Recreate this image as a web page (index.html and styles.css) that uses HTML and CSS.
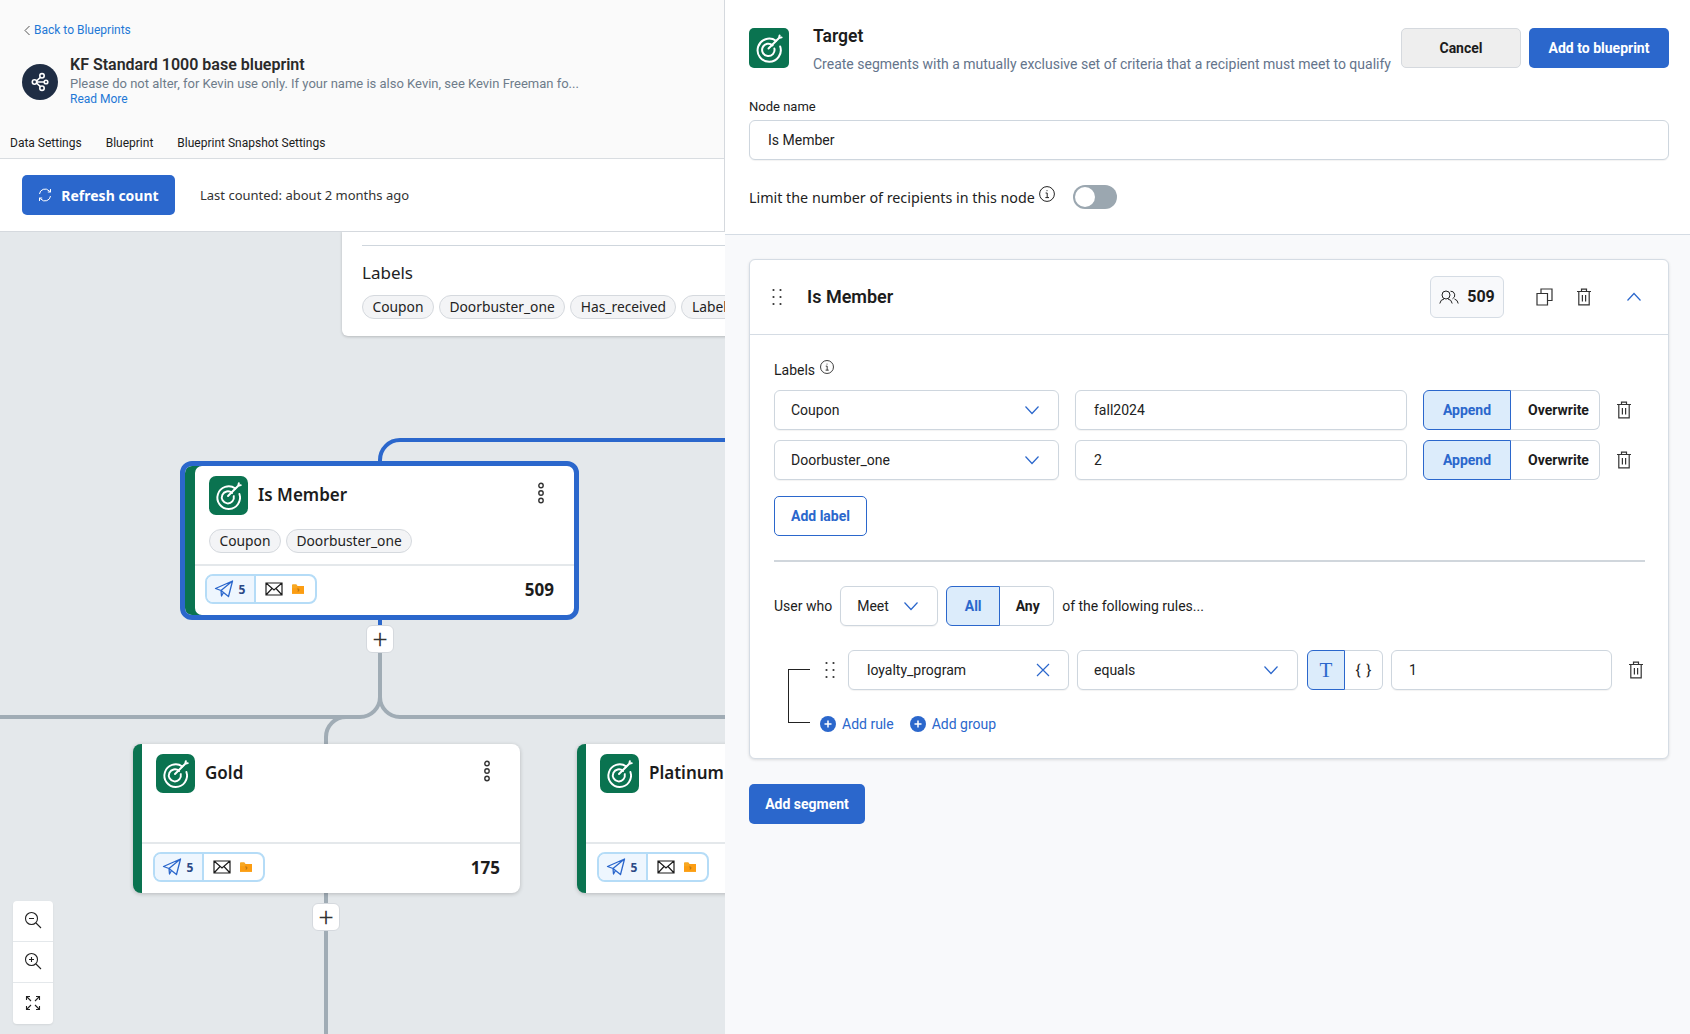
FILE: index.html
```html
<!DOCTYPE html>
<html lang="en">
<head>
    <meta charset="UTF-8">
    <title>KF Standard 1000 base blueprint</title>
    <link rel="stylesheet" href="styles.css">
</head>
<body>
    <svg class="defs">
        <symbol id="target" viewBox="0 0 40 40">
            <path d="M27 12.8A11.6 11.6 0 1 0 31.2 18.5" fill="none" stroke="#fff" stroke-width="2" stroke-linecap="round"/>
            <path d="M23.6 17.4A6.2 6.2 0 1 0 25.4 20.6" fill="none" stroke="#fff" stroke-width="2" stroke-linecap="round"/>
            <path d="M19.5 20.5L30 10M30 10L30.6 7.4M30 10L32.6 9.4" fill="none" stroke="#fff" stroke-width="2" stroke-linecap="round"/>
        </symbol>
        <symbol id="plane" viewBox="0 0 20 20">
            <path d="M18.5 2L1.5 9.5L7 11.5L18.5 2L14.5 17.5L9.5 13.5L7 11.5L7.5 17L9.5 13.5" fill="none" stroke="currentColor" stroke-width="1.3" stroke-linejoin="round"/>
        </symbol>
        <symbol id="mail" viewBox="0 0 18 16">
            <path d="M1 2H17V14H1ZM1 2L9 9L17 2M1 14L7 7.5M17 14L11 7.5" fill="none" stroke="#1c1c1c" stroke-width="1.2"/>
        </symbol>
        <symbol id="folder" viewBox="0 0 16 14">
            <path d="M1 2.5Q1 1.5 2 1.5H6L7.5 3.5H15V12.5H1Z" fill="#f7a823"/>
            <path d="M7.5 3.5H15V12.5H1V6H6Z" fill="#fc9d12"/>
            <path d="M7 7H9V9H8V10" fill="none" stroke="#9a6a1a" stroke-width=".8"/>
        </symbol>
        <symbol id="trash" viewBox="0 0 16 18">
            <path d="M1 3.5H15M5.5 3.5V1.2H10.5V3.5M2.8 3.5V16.8H13.2V3.5M6.4 7V13.5M9.6 7V13.5" fill="none" stroke="currentColor" stroke-width="1.2"/>
        </symbol>
        <symbol id="chev" viewBox="0 0 16 10">
            <path d="M1.5 1.5L8 8.5L14.5 1.5" fill="none" stroke="#2b67cc" stroke-width="1.2"/>
        </symbol>
        <symbol id="info" viewBox="0 0 16 16">
            <circle cx="8" cy="8" r="7.4" fill="none" stroke="#222" stroke-width="1"/>
            <path d="M6.6 7H8.2V11.6M6.4 11.6H10M8 4.2V5.2" fill="none" stroke="#222" stroke-width="1"/>
        </symbol>
        <symbol id="dots" viewBox="0 0 10 18">
            <g fill="#333">
                <circle cx="1.5" cy="2" r="1.1"/><circle cx="8.5" cy="2" r="1.1"/>
                <circle cx="1.5" cy="9" r="1.1"/><circle cx="8.5" cy="9" r="1.1"/>
                <circle cx="1.5" cy="16" r="1.1"/><circle cx="8.5" cy="16" r="1.1"/>
            </g>
        </symbol>
        <symbol id="kebab" viewBox="0 0 8 22">
            <g fill="none" stroke="#333" stroke-width="1.4">
                <circle cx="4" cy="3.5" r="2.2"/><circle cx="4" cy="11" r="2.2"/><circle cx="4" cy="18.5" r="2.2"/>
            </g>
        </symbol>
        <symbol id="addcircle" viewBox="0 0 16 16">
            <circle cx="8" cy="8" r="8" fill="#2b67cc"/>
            <path d="M8 4.5V11.5M4.5 8H11.5" stroke="#fff" stroke-width="1.5"/>
        </symbol>
    </svg>

    <div class="left">
        <div class="bp-head">
            <a class="back"><svg width="7" height="11" viewBox="0 0 7 11"><path d="M5.5 1L1 5.5L5.5 10" fill="none" stroke="#555" stroke-width="1"/></svg>Back to Blueprints</a>
            <div class="bp-info">
                <div class="bp-avatar">
                    <svg width="20" height="20" viewBox="0 0 20 20"><g fill="none" stroke="#fff" stroke-width="1.6"><circle cx="4.5" cy="10" r="2.2"/><circle cx="12" cy="3.8" r="2.2"/><circle cx="12" cy="16.2" r="2.2"/><circle cx="16" cy="10" r="1.8"/><path d="M6.5 9L10.4 5.3M6.5 11L10.4 14.7M6.7 10H14.2"/></g></svg>
                </div>
                <div>
                    <div class="bp-title">KF Standard 1000 base blueprint</div>
                    <div class="bp-desc">Please do not alter, for Kevin use only. If your name is also Kevin, see Kevin Freeman fo...</div>
                    <a class="read-more">Read More</a>
                </div>
            </div>
            <div class="tabs">
                <span>Data Settings</span>
                <span>Blueprint</span>
                <span>Blueprint Snapshot Settings</span>
            </div>
        </div>
        <div class="count-bar">
            <button class="btn-refresh">
                <svg width="14" height="16" viewBox="0 0 14 16"><path d="M1.5 7A5.5 5.5 0 0 1 11 3.8L12.5 5M12.5 9A5.5 5.5 0 0 1 3 12.2L1.5 11M12.5 2V5H9.8M1.5 14V11H4.2" fill="none" stroke="#fff" stroke-width="1"/></svg>
                Refresh count
            </button>
            <span class="last-counted">Last counted: about 2 months ago</span>
        </div>

        <div class="canvas">
            <svg class="wires" width="725" height="803">
                <g fill="none" stroke-width="4">
                    <path d="M380 230V228a20 20 0 0 1 20-20H725M380 388V396" stroke="#2b67cc"/>
                    <path d="M380 420V465a20 20 0 0 1-20 20H0M380 465a20 20 0 0 0 20 20H725M346 485a20 20 0 0 0-20 20V514M326 660V803" stroke="#a0acb5"/>
                </g>
            </svg>

            <div class="labels-card">
                <div class="labels-rule"></div>
                <div class="labels-title">Labels</div>
                <div class="chips">
                    <span class="chip">Coupon</span>
                    <span class="chip">Doorbuster_one</span>
                    <span class="chip">Has_received</span>
                    <span class="chip">Label</span>
                </div>
            </div>

            <div class="node selected node-member">
                <div class="node-top">
                    <svg class="node-icon" width="39" height="39"><use href="#target"/></svg>
                    <span class="node-name">Is Member</span>
                    <svg class="kebab" width="8" height="22"><use href="#kebab"/></svg>
                </div>
                <div class="chips node-chips">
                    <span class="chip">Coupon</span>
                    <span class="chip">Doorbuster_one</span>
                </div>
                <div class="node-foot">
                    <div class="pill">
                        <span class="pill-a"><svg width="20" height="20"><use href="#plane"/></svg><span class="pill-num">5</span></span>
                        <span class="pill-b"><svg width="18" height="16"><use href="#mail"/></svg><svg width="14" height="12"><use href="#folder"/></svg></span>
                    </div>
                    <span class="node-count">509</span>
                </div>
            </div>
            <button class="plus plus-member">+</button>

            <div class="node node-gold">
                <div class="node-top">
                    <svg class="node-icon" width="39" height="39"><use href="#target"/></svg>
                    <span class="node-name">Gold</span>
                    <svg class="kebab" width="8" height="22"><use href="#kebab"/></svg>
                </div>
                <div class="node-foot">
                    <div class="pill">
                        <span class="pill-a"><svg width="20" height="20"><use href="#plane"/></svg><span class="pill-num">5</span></span>
                        <span class="pill-b"><svg width="18" height="16"><use href="#mail"/></svg><svg width="14" height="12"><use href="#folder"/></svg></span>
                    </div>
                    <span class="node-count">175</span>
                </div>
            </div>
            <button class="plus plus-gold">+</button>

            <div class="node node-platinum">
                <div class="node-top">
                    <svg class="node-icon" width="39" height="39"><use href="#target"/></svg>
                    <span class="node-name">Platinum</span>
                </div>
                <div class="node-foot">
                    <div class="pill">
                        <span class="pill-a"><svg width="20" height="20"><use href="#plane"/></svg><span class="pill-num">5</span></span>
                        <span class="pill-b"><svg width="18" height="16"><use href="#mail"/></svg><svg width="14" height="12"><use href="#folder"/></svg></span>
                    </div>
                </div>
            </div>

            <div class="zoom-tools">
                <div class="zoom-btn"><svg width="18" height="18" viewBox="0 0 18 18"><g fill="none" stroke="#222" stroke-width="1.1"><circle cx="7.5" cy="7.5" r="6"/><path d="M12 12L17 17M5 7.5H10"/></g></svg></div>
                <div class="zoom-btn"><svg width="18" height="18" viewBox="0 0 18 18"><g fill="none" stroke="#222" stroke-width="1.1"><circle cx="7.5" cy="7.5" r="6"/><path d="M12 12L17 17M5 7.5H10M7.5 5V10"/></g></svg></div>
                <div class="zoom-btn"><svg width="16" height="16" viewBox="0 0 16 16"><path d="M6 6L1.5 1.5M1.5 5V1.5H5M10 6L14.5 1.5M11 1.5H14.5V5M6 10L1.5 14.5M1.5 11V14.5H5M10 10L14.5 14.5M14.5 11V14.5H11" fill="none" stroke="#222" stroke-width="1.1"/></svg></div>
            </div>
        </div>
    </div>

    <div class="right">
        <div class="panel-top">
            <div class="panel-head">
                <svg class="panel-icon" width="40" height="40"><use href="#target"/></svg>
                <div class="panel-text">
                    <div class="panel-title">Target</div>
                    <div class="panel-desc">Create segments with a mutually exclusive set of criteria that a recipient must meet to qualify</div>
                </div>
                <button class="btn btn-cancel">Cancel</button>
                <button class="btn btn-primary btn-add">Add to blueprint</button>
            </div>
            <label class="field-label">Node name</label>
            <div class="input node-input">Is Member</div>
            <div class="limit-row">
                <span class="limit-text">Limit the number of recipients in this node</span>
                <svg class="limit-info" width="16" height="16"><use href="#info"/></svg>
                <span class="toggle"><span class="toggle-knob"></span></span>
            </div>
        </div>

        <div class="panel-body">
            <div class="segment">
                <div class="segment-head">
                    <svg width="10" height="18"><use href="#dots"/></svg>
                    <span class="segment-name">Is Member</span>
                    <span class="seg-count">
                        <svg width="20" height="14" viewBox="0 0 20 14"><g fill="none" stroke="#222" stroke-width="1"><circle cx="7" cy="5" r="4"/><path d="M.8 13.5Q1.5 9.5 5 9M13.2 13.5Q12.5 9.5 9 9M11.5 1.2A4 4 0 0 1 13.5 8.8M19.2 13.5Q18.8 10 15.5 9"/></g></svg>
                        509
                    </span>
                    <svg class="seg-copy" width="17" height="18" viewBox="0 0 17 18"><path d="M1 5.5H11.5V17H1ZM5 5.5V1H16V12.5H11.5" fill="none" stroke="#333" stroke-width="1.2"/></svg>
                    <svg class="seg-trash" width="16" height="18"><use href="#trash"/></svg>
                    <svg class="seg-chev" width="16" height="10"><use href="#chev"/></svg>
                </div>
                <div class="segment-body">
                    <div class="labels-head">
                        <span>Labels</span>
                        <svg width="14" height="14"><use href="#info"/></svg>
                    </div>
                    <div class="label-row">
                        <div class="input select"><span>Coupon</span><svg width="16" height="10"><use href="#chev"/></svg></div>
                        <div class="input label-value">fall2024</div>
                        <div class="seg-toggle">
                            <span class="opt opt-on opt-append">Append</span><span class="opt opt-over">Overwrite</span>
                        </div>
                        <svg class="row-trash" width="16" height="18"><use href="#trash"/></svg>
                    </div>
                    <div class="label-row">
                        <div class="input select"><span>Doorbuster_one</span><svg width="16" height="10"><use href="#chev"/></svg></div>
                        <div class="input label-value">2</div>
                        <div class="seg-toggle">
                            <span class="opt opt-on opt-append">Append</span><span class="opt opt-over">Overwrite</span>
                        </div>
                        <svg class="row-trash" width="16" height="18"><use href="#trash"/></svg>
                    </div>
                    <button class="btn btn-outline">Add label</button>
                    <div class="body-rule"></div>
                    <div class="who-row">
                        <span>User who</span>
                        <div class="input select meet"><span>Meet</span><svg width="16" height="10"><use href="#chev"/></svg></div>
                        <div class="seg-toggle">
                            <span class="opt opt-on opt-all">All</span><span class="opt opt-any">Any</span>
                        </div>
                        <span>of the following rules...</span>
                    </div>
                    <div class="rules">
                        <div class="rule-tree"></div>
                        <div class="rule-main">
                            <div class="rule-row">
                                <svg class="rule-drag" width="10" height="18"><use href="#dots"/></svg>
                                <div class="input select rule-field"><span>loyalty_program</span><svg width="14" height="14" viewBox="0 0 14 14"><path d="M1 1L13 13M13 1L1 13" fill="none" stroke="#2b67cc" stroke-width="1.2"/></svg></div>
                                <div class="input select rule-op"><span>equals</span><svg width="16" height="10"><use href="#chev"/></svg></div>
                                <div class="seg-toggle rule-type">
                                    <span class="opt opt-on opt-t">T</span><span class="opt opt-brace">{ }</span>
                                </div>
                                <div class="input rule-value">1</div>
                                <svg class="rule-trash" width="16" height="18"><use href="#trash"/></svg>
                            </div>
                            <div class="rule-actions">
                                <a class="add-link"><svg width="16" height="16"><use href="#addcircle"/></svg>Add rule</a>
                                <a class="add-link"><svg width="16" height="16"><use href="#addcircle"/></svg>Add group</a>
                            </div>
                        </div>
                    </div>
                </div>
            </div>
            <button class="btn btn-primary btn-segment">Add segment</button>
        </div>
    </div>
</body>
</html>
```

FILE: styles.css
```css
* {
    box-sizing: border-box;
}
html, body {
    height: 100%;
}
body {
    margin: 0;
    display: flex;
    height: 1034px;
    overflow: hidden;
    font-family: Roboto, sans-serif;
    font-size: 14px;
    color: #1c1c1c;
    background: #fff;
}
button {
    font-family: inherit;
    cursor: pointer;
}
.defs {
    position: absolute;
    width: 0;
    height: 0;
}

/* left side */
.left {
    width: 725px;
    flex: none;
    display: flex;
    flex-direction: column;
    overflow: hidden;
}
.bp-head {
    height: 159px;
    background: #fafafa;
    border-bottom: 1px solid #d9dde1;
    padding-top: 23px;
}
.back {
    display: flex;
    align-items: center;
    gap: 3px;
    margin-left: 24px;
    height: 14px;
    font-size: 12px;
    color: #1e78d6;
}
.bp-info {
    display: flex;
    align-items: flex-start;
    gap: 12px;
    margin: 17px 0 0 22px;
}
.bp-avatar {
    width: 36px;
    height: 36px;
    margin-top: 10px;
    border-radius: 50%;
    background: #1f2d44;
    display: flex;
    align-items: center;
    justify-content: center;
    flex: none;
}
.bp-title {
    font-size: 16px;
    font-weight: 600;
    line-height: 22px;
    color: #2a2a2a;
}
.bp-desc {
    font-size: 13px;
    line-height: 16px;
    color: #6e7c8a;
}
.read-more {
    display: block;
    font-size: 12px;
    line-height: 15px;
    color: #1e78d6;
}
.tabs {
    display: flex;
    gap: 24px;
    margin: 28px 0 0 10px;
    font-size: 12px;
    line-height: 16px;
}
.count-bar {
    height: 73px;
    flex: none;
    display: flex;
    align-items: center;
    padding-left: 22px;
    background: #fff;
    border-bottom: 1px solid #d5d9de;
}
.btn-refresh {
    width: 153px;
    height: 40px;
    display: flex;
    align-items: center;
    justify-content: center;
    gap: 9px;
    border: none;
    border-radius: 5px;
    background: #2b67cc;
    color: #fff;
    font-family: "Noto Sans", sans-serif;
    font-size: 14px;
    font-weight: 700;
}
.last-counted {
    margin-left: 25px;
    font-family: "Noto Sans", sans-serif;
    font-size: 13px;
    color: #333;
}

/* canvas */
.canvas {
    position: relative;
    flex: 1;
    background: #e4e8eb;
    overflow: hidden;
    font-family: "Noto Sans", sans-serif;
}
.wires {
    position: absolute;
    left: 0;
    top: 0;
}
.labels-card {
    position: absolute;
    left: 342px;
    top: -1px;
    width: 420px;
    height: 105px;
    padding: 14px 0 0 20px;
    background: #fff;
    border-radius: 0 0 6px 6px;
    box-shadow: 0 1px 3px rgba(0, 0, 0, .2);
}
.labels-rule {
    height: 1px;
    background: #cfd6dd;
}
.labels-title {
    margin-top: 16px;
    font-size: 17px;
    line-height: 22px;
    color: #222;
}
.chips {
    display: flex;
    gap: 5px;
    margin-top: 11px;
    white-space: nowrap;
}
.chip {
    height: 24px;
    padding: 0 9.5px;
    border: 1px solid #d5d9de;
    border-radius: 12px;
    background: #f3f4f6;
    font-size: 13.8px;
    line-height: 22px;
    color: #222;
}
.node {
    position: absolute;
    display: flex;
    flex-direction: column;
    background: #fff;
    border-left: 9px solid #0a7350;
    border-radius: 8px;
    box-shadow: 0 1px 4px rgba(0, 0, 0, .2);
}
.node-member {
    left: 180px;
    top: 229px;
    width: 399px;
    height: 159px;
}
.node-gold {
    left: 133px;
    top: 512px;
    width: 387px;
    height: 149px;
}
.node-platinum {
    left: 577px;
    top: 512px;
    width: 387px;
    height: 149px;
}
.selected {
    border: 5px solid #2b67cc;
    border-radius: 12px;
    box-shadow: inset 10px 0 0 #0a7350;
    background: #fff;
}
.node-top {
    display: flex;
    align-items: center;
    height: 40px;
    margin: 9px 0 0 14px;
    flex: none;
}
.selected .node-top {
    margin: 9px 0 0 24px;
}
.node-icon {
    background: #0a7350;
    border-radius: 7px;
    flex: none;
}
.node-name {
    margin-left: 10px;
    margin-top: -1px;
    font-size: 17px;
    font-weight: 600;
    color: #1c1c1c;
}
.kebab {
    margin-left: auto;
    margin-right: 29px;
    margin-top: -4px;
}
.node-chips {
    margin: 14px 0 0 24px;
}
.node-foot {
    margin-top: auto;
    height: 51px;
    display: flex;
    align-items: center;
    justify-content: space-between;
    padding: 0 20px 3px 11px;
    border-top: 2px solid #e4e8eb;
}
.selected .node-foot {
    margin-left: 10px;
    padding: 0 20px 3px 10px;
}
.pill {
    display: flex;
    width: 112px;
    height: 30px;
    border: 2px solid #b5dcf7;
    border-radius: 8px;
    overflow: hidden;
}
.pill-a {
    width: 49px;
    display: flex;
    align-items: center;
    justify-content: center;
    gap: 5px;
    padding-right: 2px;
    background: #eef6fe;
    border-right: 2px solid #b5dcf7;
    color: #2b67cc;
    font-size: 12px;
    font-weight: 700;
}
.pill-num {
    color: #2c4a86;
}
.pill-b {
    flex: 1;
    display: flex;
    align-items: center;
    gap: 8px;
    padding-left: 9px;
}
.node-count {
    font-size: 17px;
    font-weight: 700;
    color: #1c1c1c;
}
.plus {
    position: absolute;
    width: 28px;
    height: 28px;
    padding: 0;
    border: 1px solid #d5d9de;
    border-radius: 6px;
    background: #fff;
    font-family: Roboto, sans-serif;
    font-size: 26px;
    font-weight: 300;
    line-height: 24px;
    color: #333;
}
.plus-member {
    left: 366px;
    top: 393px;
}
.plus-gold {
    left: 312px;
    top: 671px;
}
.zoom-tools {
    position: absolute;
    left: 13px;
    top: 669px;
    width: 40px;
    background: #fff;
    border-radius: 4px;
    box-shadow: 0 1px 2px rgba(0, 0, 0, .08);
}
.zoom-btn {
    height: 41px;
    padding-bottom: 2px;
    display: flex;
    align-items: center;
    justify-content: center;
    border-bottom: 1px solid #e4e8eb;
}
.zoom-btn:last-child {
    border-bottom: none;
}

/* right panel */
.right {
    flex: 1;
    min-width: 0;
    display: flex;
    flex-direction: column;
    border-left: 1px solid #d5d9de;
    margin-left: -1px;
    background: #f8f9fb;
}
.panel-top {
    height: 235px;
    padding: 28px 21px 0 24px;
    background: #fff;
    border-bottom: 1px solid #d5dce4;
}
.panel-head {
    display: flex;
    align-items: flex-start;
}
.panel-icon {
    background: #0a7350;
    border-radius: 5px;
    flex: none;
}
.panel-text {
    margin-left: 24px;
    flex: 1;
    white-space: nowrap;
}
.panel-title {
    font-size: 17.5px;
    font-weight: 600;
    line-height: 20px;
    color: #1c1c1c;
    margin-top: -2px;
}
.panel-desc {
    margin-top: 8px;
    font-size: 14px;
    line-height: 20px;
    color: #64748b;
}
.btn {
    height: 40px;
    border-radius: 5px;
    border: 1px solid transparent;
    font-size: 14px;
    font-weight: 700;
    flex: none;
}
.btn-cancel {
    width: 120px;
    background: #eeeeee;
    border-color: #d5d9de;
    color: #1c1c1c;
}
.btn-primary {
    background: #2b67cc;
    color: #fff;
}
.btn-add {
    width: 140px;
    margin-left: 8px;
}
.field-label {
    display: block;
    margin-top: 25px;
    font-size: 13px;
    line-height: 16px;
    color: #1c1c1c;
}
.input {
    height: 40px;
    display: flex;
    align-items: center;
    padding: 0 16px;
    background: #fff;
    border: 1px solid #ced6de;
    border-radius: 6px;
    box-shadow: 0 1px 1px rgba(0, 0, 0, .05);
    font-size: 14px;
    color: #222;
}
.node-input {
    margin-top: 5px;
    padding-left: 18px;
}
.limit-row {
    display: flex;
    align-items: center;
    margin-top: 25px;
    height: 24px;
}
.limit-text {
    font-family: "Noto Sans", sans-serif;
    font-size: 14.3px;
    color: #222;
}
.limit-info {
    margin: -6px 0 0 4px;
}
.toggle {
    width: 44px;
    height: 24px;
    margin-left: 18px;
    padding: 2px;
    border-radius: 12px;
    background: #9ba7b0;
}
.toggle-knob {
    display: block;
    width: 20px;
    height: 20px;
    border-radius: 50%;
    background: #fff;
}
.panel-body {
    flex: 1;
    padding: 24px 21px 0 24px;
}
.segment {
    background: #fff;
    border: 1px solid #d5dce4;
    border-radius: 6px;
    height: 500px;
    box-shadow: 0 1px 3px rgba(0, 0, 0, .12);
}
.segment-head {
    height: 75px;
    display: flex;
    align-items: center;
    padding-left: 22px;
    padding-bottom: 1px;
    border-bottom: 1px solid #d5dce4;
}
.segment-name {
    margin-left: 25px;
    font-size: 18px;
    font-weight: 600;
    color: #1c1c1c;
}
.seg-count {
    margin-left: auto;
    width: 74px;
    height: 42px;
    display: flex;
    align-items: center;
    justify-content: center;
    gap: 8px;
    background: #f8f9fb;
    border: 1px solid #d5dce4;
    border-radius: 6px;
    font-size: 16px;
    font-weight: 700;
}
.seg-copy {
    margin-left: 32px;
}
.seg-trash {
    margin-left: 23px;
    color: #333;
}
.seg-chev {
    margin: 0 26px 0 34px;
    transform: rotate(180deg);
}
.segment-body {
    padding: 25px 23px 0 24px;
}
.labels-head {
    display: flex;
    align-items: flex-start;
    gap: 5px;
    height: 20px;
    line-height: 20px;
}
.label-row {
    display: flex;
    align-items: center;
    gap: 16px;
    margin-top: 10px;
}
.select {
    justify-content: space-between;
    padding-right: 18px;
    flex: none;
}
.label-row .select {
    width: 285px;
}
.label-value {
    width: 332px;
    padding-left: 18px;
}
.seg-toggle {
    display: flex;
    height: 40px;
    flex: none;
    font-size: 14px;
    font-weight: 700;
}
.opt {
    display: flex;
    align-items: center;
    justify-content: center;
    border: 1px solid #ced6de;
    border-left: none;
    border-radius: 0 6px 6px 0;
    background: #fff;
}
.opt-on {
    border: 1px solid #2b67cc;
    border-radius: 6px 0 0 6px;
    background: #dcecfb;
    color: #2b67cc;
}
.opt-append {
    width: 88px;
}
.opt-over {
    width: 89px;
    padding-left: 7px;
}
.row-trash {
    margin-left: 0;
    color: #333;
}
.btn-outline {
    display: block;
    width: 93px;
    margin-top: 16px;
    background: #fff;
    border-color: #2b67cc;
    color: #2b67cc;
}
.body-rule {
    height: 2px;
    margin-top: 24px;
    background: #d0d6dc;
}
.who-row {
    display: flex;
    align-items: center;
    margin-top: 24px;
    gap: 8px;
    height: 40px;
}
.meet {
    width: 98px;
}
.opt-all {
    width: 54px;
}
.opt-any {
    width: 54px;
    padding-left: 2px;
}
.rules {
    display: flex;
    margin-top: 24px;
}
.rule-tree {
    width: 22px;
    height: 54px;
    margin: 19px 1px 0 14px;
    border: 1px solid #222;
    border-right: none;
    flex: none;
}
.rule-main {
    flex: 1;
    min-width: 0;
}
.rule-row {
    display: flex;
    align-items: center;
    gap: 8px;
}
.rule-drag {
    margin-left: 14px;
    flex: none;
}
.rule-field {
    width: 221px;
    margin-left: 5px;
    padding-left: 18px;
}
.rule-op {
    width: 221px;
}
.rule-type {
    margin-left: 1px;
}
.opt-t {
    width: 38px;
    font-family: "Liberation Serif", serif;
    font-weight: 400;
    font-size: 21px;
}
.opt-brace {
    width: 38px;
    font-weight: 400;
    font-size: 15px;
    word-spacing: 2px;
}
.rule-value {
    width: 221px;
    padding-left: 17px;
    flex: none;
}
.rule-trash {
    margin-left: 8px;
    color: #333;
    flex: none;
}
.rule-actions {
    display: flex;
    gap: 16px;
    margin: 26px 0 0 9px;
}
.add-link {
    display: flex;
    align-items: center;
    gap: 6px;
    color: #2b67cc;
    font-size: 14px;
}
.btn-segment {
    display: block;
    width: 116px;
    margin-top: 25px;
}
```
